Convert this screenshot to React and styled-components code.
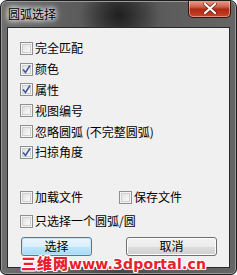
import React from 'react';
import styled, { createGlobalStyle } from 'styled-components';

const Global = createGlobalStyle`
  html, body {
    margin: 0;
    padding: 0;
    background: #ffffff;
  }
  body {
    font-family: "Noto Sans CJK SC", "DejaVu Sans", sans-serif;
  }
`;

const Window = styled.div`
  position: relative;
  width: 237px;
  height: 275px;
  box-sizing: border-box;
  border-radius: 7px 7px 6px 6px;
  border: 1px solid #1c1c1c;
  background:
    radial-gradient(ellipse 40px 30px at 118px 14px, rgba(0,0,0,0.55), rgba(0,0,0,0) 100%),
    linear-gradient(90deg, #6e6e6e 0%, #5a5a5a 35%, #454545 50%, #5c5c5c 70%, #666 100%);
  box-shadow: inset 0 0 0 1px #9a9a9a;
  display: flex;
  flex-direction: column;
  padding: 0 6px 6px 6px;
  overflow: hidden;
`;

const TitleBar = styled.div`
  height: 26px;
  display: flex;
  align-items: flex-start;
  justify-content: space-between;
  flex-shrink: 0;
`;

const Title = styled.span`
  margin-top: 6px;
  margin-left: 1px;
  font-size: 12px;
  line-height: 14px;
  color: #000;
  text-shadow: 0 0 4px #fff, 0 0 6px #fff, 0 0 8px rgba(255,255,255,0.8);
`;

const CloseButton = styled.div`
  width: 43px;
  height: 18px;
  margin-top: -1px;
  margin-right: -1px;
  box-sizing: border-box;
  border: 1px solid #3a1410;
  border-top: none;
  border-radius: 0 0 5px 5px;
  background: linear-gradient(180deg, #e9a89a 0%, #d0604a 40%, #b02812 55%, #c8452a 100%);
  box-shadow: inset 0 0 0 1px rgba(255,220,210,0.5);
  display: flex;
  align-items: center;
  justify-content: center;
`;

const Client = styled.div`
  position: relative;
  flex: 1;
  box-sizing: border-box;
  border: 1px solid #2a2a2a;
  background: #f0f0f0;
  padding: 10px 0 0 12px;
  display: flex;
  flex-direction: column;
`;

const List = styled.div`
  display: flex;
  flex-direction: column;
  flex-shrink: 0;
`;

const Row = styled.label`
  display: flex;
  align-items: center;
  gap: 2px;
  flex-shrink: 0;
  height: ${p => p.h || 20.8}px;
  font-size: 12px;
  line-height: 14px;
  color: #000;
  white-space: nowrap;
  width: ${p => (p.w ? `${p.w}px` : 'auto')};
`;

const RowLine = styled.div`
  display: flex;
  flex-shrink: 0;
  margin-top: ${p => p.mt || 0}px;
`;

const Box = styled.span`
  width: 13px;
  height: 13px;
  box-sizing: border-box;
  border: 1px solid #8e8f8f;
  background: linear-gradient(135deg, #d8d8d8 0%, #f2f2f2 60%, #ffffff 100%);
  box-shadow: inset 0 0 0 1px #f4f4f4, inset 0 0 0 2px #cfcfcf;
  display: flex;
  align-items: center;
  justify-content: center;
  flex-shrink: 0;
`;

const Buttons = styled.div`
  display: flex;
  flex-shrink: 0;
  margin-top: 3.5px;
  margin-left: 1px;
`;

const Button = styled.div`
  width: ${p => p.w}px;
  height: 19px;
  margin-right: ${p => p.mr || 0}px;
  box-sizing: border-box;
  border-radius: 3px;
  border: 1px solid ${p => (p.primary ? '#3c7fb1' : '#707070')};
  background: ${p =>
    p.primary
      ? 'linear-gradient(180deg, #eaf6fd 0%, #d9f0fc 50%, #bee6fd 51%, #a7d9f5 100%)'
      : 'linear-gradient(180deg, #f2f2f2 0%, #ebebeb 50%, #dddddd 51%, #cfcfcf 100%)'};
  box-shadow: inset 0 0 0 1px ${p => (p.primary ? '#c4e5f6' : '#fcfcfc')};
  display: flex;
  align-items: center;
  justify-content: center;
  font-size: 12px;
  line-height: 14px;
  color: #000;
`;

const Watermark = styled.div`
  position: absolute;
  left: 13px;
  top: 228px;
  display: flex;
  align-items: baseline;
  font-weight: bold;
  color: #e8202a;
  white-space: nowrap;
  text-shadow:
    1px 0 0 #fff, -1px 0 0 #fff, 0 1px 0 #fff, 0 -1px 0 #fff,
    1px 1px 0 #fff, -1px -1px 0 #fff, 1px -1px 0 #fff, -1px 1px 0 #fff,
    0 0 2px #f7a0a0;
`;

const WmCn = styled.span`
  font-family: "Noto Sans CJK SC", sans-serif;
  font-size: 15px;
  line-height: 13px;
  letter-spacing: 1px;
  font-weight: 900;
`;

const WmEn = styled.span`
  font-family: "DejaVu Sans", sans-serif;
  font-size: 14px;
  line-height: 13px;
  letter-spacing: 0.2px;
  font-weight: 900;
`;

function Check({ checked }) {
  return (
    <Box>
      {checked && (
        <svg width="9" height="9" viewBox="0 0 9 9">
          <path d="M1 4.5 L3.5 7.5 L8 0.5" fill="none" stroke="#3d57a4" strokeWidth="1.6" />
        </svg>
      )}
    </Box>
  );
}

const items = [
  ['完全匹配', false],
  ['颜色', true],
  ['属性', true],
  ['视图编号', false],
  ['忽略圆弧 (不完整圆弧)', false],
  ['扫掠角度', true],
];

export default function App() {
  return (
    <>
      <Global />
      <Window>
        <TitleBar>
          <Title>圆弧选择</Title>
          <CloseButton>
            <svg width="14" height="11" viewBox="0 0 14 11">
              <path d="M2 1 L12 10 M12 1 L2 10" stroke="#5a2a20" strokeWidth="3.6" strokeLinecap="round" />
              <path d="M2 1 L12 10 M12 1 L2 10" stroke="#fff" strokeWidth="2.2" strokeLinecap="round" />
            </svg>
          </CloseButton>
        </TitleBar>
        <Client>
          <List>
            {items.map(([t, c]) => (
              <Row key={t}>
                <Check checked={c} />
                {t}
              </Row>
            ))}
          </List>
          <RowLine mt={22.7}>
            <Row w={99} h={24}>
              <Check />
              加载文件
            </Row>
            <Row h={24}>
              <Check />
              保存文件
            </Row>
          </RowLine>
          <RowLine>
            <Row h={24}>
              <Check />
              只选择一个圆弧/圆
            </Row>
          </RowLine>
          <Buttons>
            <Button primary w={71} mr={34}>选择</Button>
            <Button w={91}>取消</Button>
          </Buttons>
          <Watermark>
            <WmCn>三维网</WmCn>
            <WmEn>www.3dportal.cn</WmEn>
          </Watermark>
        </Client>
      </Window>
    </>
  );
}
